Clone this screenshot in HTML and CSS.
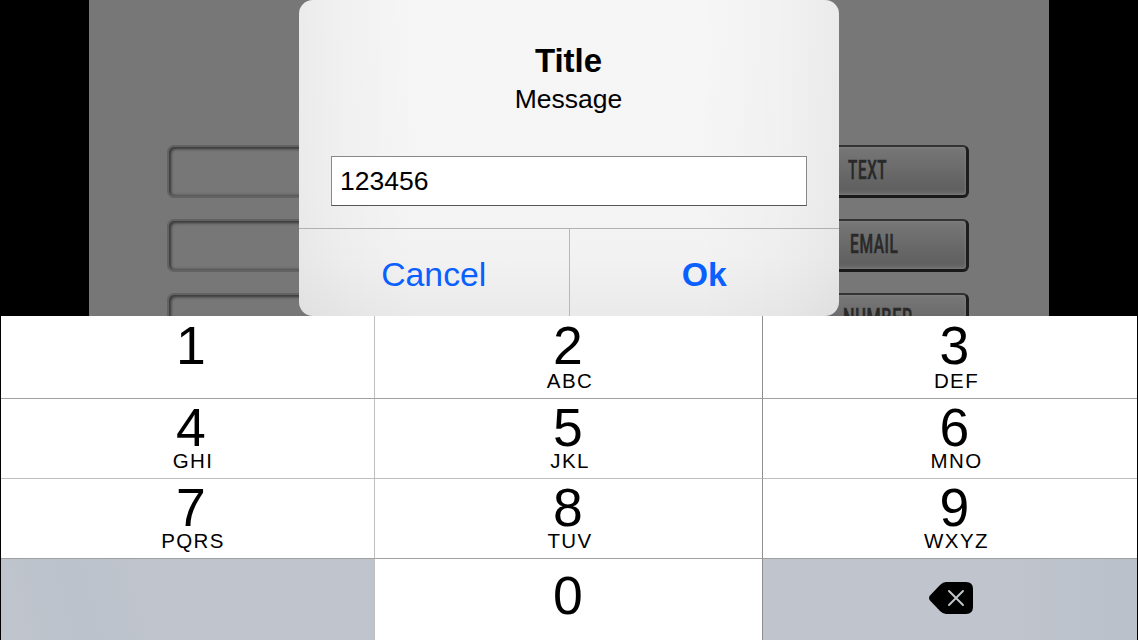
FILE: index.html
```html
<!DOCTYPE html>
<html lang="en">
<head>
<meta charset="utf-8">
<title>Input dialog</title>
<link rel="stylesheet" href="styles.css">
</head>
<body>
<div class="screen">
  <div class="stage">
    <div class="form">
      <div class="form-row"><div class="field"></div><div class="btn"><span class="btn-label text">TEXT</span></div></div>
      <div class="form-row"><div class="field"></div><div class="btn"><span class="btn-label email">EMAIL</span></div></div>
      <div class="form-row"><div class="field"></div><div class="btn"><span class="btn-label number">NUMBER</span></div></div>
    </div>
    <div class="dialog">
      <div class="dialog-body">
        <div class="dialog-title">Title</div>
        <div class="dialog-message">Message</div>
        <div class="dialog-input">123456</div>
      </div>
      <div class="dialog-actions">
        <div class="action cancel">Cancel</div>
        <div class="action ok">Ok</div>
      </div>
    </div>
  </div>
  <div class="keypad">
    <div class="key first"><span class="digit">1</span></div>
    <div class="key mid first"><span class="digit">2</span><span class="letters">ABC</span></div>
    <div class="key last first"><span class="digit">3</span><span class="letters">DEF</span></div>
    <div class="key thin"><span class="digit">4</span><span class="letters">GHI</span></div>
    <div class="key mid thin"><span class="digit">5</span><span class="letters">JKL</span></div>
    <div class="key last thin"><span class="digit">6</span><span class="letters">MNO</span></div>
    <div class="key"><span class="digit">7</span><span class="letters">PQRS</span></div>
    <div class="key mid"><span class="digit">8</span><span class="letters">TUV</span></div>
    <div class="key last"><span class="digit">9</span><span class="letters">WXYZ</span></div>
    <div class="key gray gray-left"></div>
    <div class="key mid zero"><span class="digit">0</span></div>
    <div class="key gray gray-right">
      <svg class="delete" width="46" height="34" viewBox="0 0 46 34">
        <path d="M18 1H38Q45 1 45 8V26Q45 33 38 33H18Q15 33 12 30L2 19.5Q0 17 2 14.5L12 4Q15 1 18 1Z" fill="#000"/>
        <path d="M21 10L35 24M35 10L21 24" stroke="#c3c7cd" stroke-width="1.9" stroke-linecap="round"/>
      </svg>
    </div>
  </div>
</div>
</body>
</html>
```
FILE: styles.css
```css
* { box-sizing: border-box; }
body {
  margin: 0;
  background: #000;
  font-family: "Liberation Sans", Arial, sans-serif;
  color: #000;
}
.screen {
  width: 1138px;
  height: 640px;
  overflow: hidden;
  display: flex;
  flex-direction: column;
}
.stage {
  position: relative;
  height: 316px;
  overflow: hidden;
}
.form {
  height: 316px;
  margin: 0 89px;
  padding: 145px 80px 0 78px;
  display: flex;
  flex-direction: column;
  gap: 21px;
  background: #777;
}
.form-row {
  flex: none;
  height: 53px;
  display: flex;
  justify-content: space-between;
}
.field {
  width: 500px;
  border: 2px solid #626262;
  border-radius: 7px;
  box-shadow: inset 2px 2px 3px #3c3c3c, inset 0 0 3px 1px #505050;
}
.btn {
  width: 200px;
  border: 2px solid #333;
  border-right: 3px solid #1d1d1d;
  border-bottom: 3px solid #191919;
  border-radius: 6px;
  background: linear-gradient(#777, #6b6b6b 45%, #606060 88%, #6c6c6c);
  box-shadow: inset 0 0 3px #888;
  display: flex;
  align-items: center;
}
.btn-label {
  font-family: Roboto, sans-serif;
  font-size: 25px;
  font-weight: 500;
  line-height: 30px;
  letter-spacing: 1px;
  -webkit-text-stroke: 0.5px #292929;
  color: #292929;
  transform-origin: left center;
}
.text { margin-left: 77px; transform: scaleX(0.61); }
.email { margin-left: 79px; transform: scaleX(0.62); }
.number { margin-left: 72px; transform: scaleX(0.65); }
.dialog {
  position: absolute;
  left: 299px;
  top: 0;
  width: 540px;
  height: 316px;
  border-radius: 14px;
  background:
    linear-gradient(90deg, rgba(0,0,0,.042), rgba(0,0,0,.018) 9%, transparent 22%, transparent 74%, rgba(0,0,0,.018) 90%, rgba(0,0,0,.046)),
    linear-gradient(#f6f6f6 0, #f5f5f5 60%, #f2f2f2 82%, #eaeaea);
  display: flex;
  flex-direction: column;
}
.dialog-body {
  height: 228px;
  padding: 41px 33px 0 32px;
  text-align: center;
}
.dialog-title {
  font-size: 33px;
  line-height: 40px;
  font-weight: bold;
}
.dialog-message {
  font-size: 26.5px;
  line-height: 32px;
  margin-top: 2px;
}
.dialog-input {
  height: 50px;
  margin: 41px -1px 0 0;
  border: 1px solid #888;
  border-bottom-color: #555;
  background: #fff;
  padding-left: 8px;
  line-height: 48px;
  font-size: 26.5px;
  text-align: left;
}
.dialog-actions {
  height: 88px;
  border-top: 1px solid #b1b1b5;
  display: flex;
}
.action {
  flex: 1;
  text-align: center;
  line-height: 91px;
  font-size: 33.8px;
  color: #0a60ff;
}
.cancel { border-right: 1px solid #b8b8bb; }
.ok { font-weight: bold; }
.keypad {
  height: 324px;
  margin: 0 1px;
  display: grid;
  grid-template-columns: 373px 389px 374px;
  grid-template-rows: 83px 80px 80px 81px;
}
.key {
  background: #fff;
  border-bottom: 1px solid #a0a0a0;
  display: flex;
  flex-direction: column;
  align-items: center;
  padding: 7px 0 0 9px;
}
.first { padding-top: 8px; }
.last { padding-left: 11px; }
.thin { border-bottom-color: #bebebe; }
.mid {
  border-left: 1px solid #bebebe;
  border-right: 1px solid #8e8e8e;
  padding-left: 1px;
}
.digit {
  font-size: 53.5px;
  line-height: 44px;
  margin-right: 2px;
}
.letters {
  font-size: 20.5px;
  line-height: 20px;
  letter-spacing: 1.4px;
  margin-top: 1px;
  padding-left: 2px;
}
.first .letters { margin-top: 3px; }
.gray { background: #c0c4cd; border-bottom: 0; }
.gray-left { background: linear-gradient(75deg, #c0c4cd, #bbc2cb 22%, #c0c4cd 45%); }
.gray-right {
  background: linear-gradient(90deg, #c0c4cd 58%, #bac1ca);
  padding: 22px 0 0 2px;
}
.zero { border-bottom: 0; padding-top: 15px; }
.delete { display: block; }
```
